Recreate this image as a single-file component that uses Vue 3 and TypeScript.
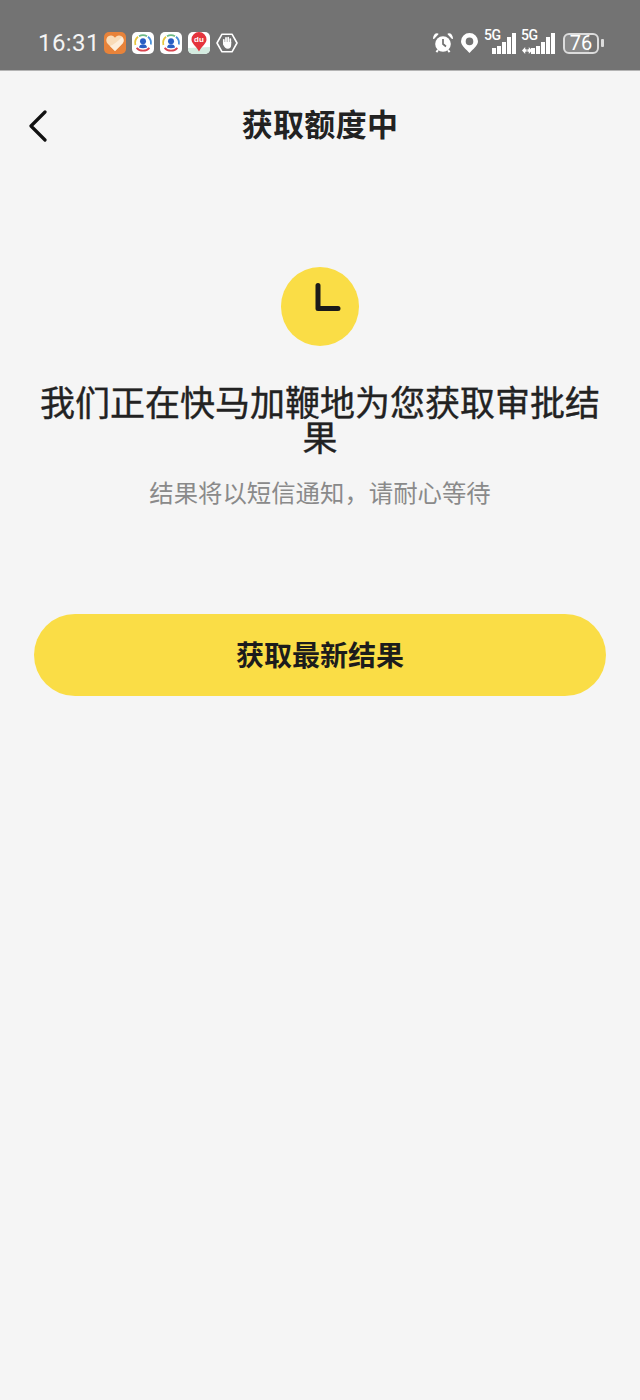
<template>
  <div class="page">
    <div class="status-bar">
      <span class="time">16:31</span>
      <div class="app-icons">
        <span class="app-icon orange">
          <svg width="22" height="22" viewBox="0 0 22 22">
            <path d="M11 19 L3.5 11.5 C0.8 8 3 3.5 7 3.5 C9 3.5 10.2 4.6 11 5.8 C11.8 4.6 13 3.5 15 3.5 C19 3.5 21.2 8 18.5 11.5 Z" fill="#f9dcb8" />
            <path d="M11 19 L6 14 C9 13 13 10 18 5 C20 7 20.2 9.5 18.5 11.5 Z" fill="#fdeedb" />
          </svg>
        </span>
        <span v-for="n in 2" :key="n" class="app-icon white">
          <svg width="22" height="22" viewBox="0 0 22 22" fill="none">
            <path d="M3.4 13 A8 8 0 0 1 6 4.8" stroke="#e8c63c" stroke-width="1.8" />
            <path d="M7 4.2 A8 8 0 0 1 15 4.2" stroke="#6dbb86" stroke-width="1.8" />
            <path d="M16 4.8 A8 8 0 0 1 18.8 12.5" stroke="#4a90d9" stroke-width="1.8" />
            <path d="M4.6 15.8 A8.5 8.5 0 0 0 17.4 15.8" stroke="#d9434e" stroke-width="1.8" />
            <circle cx="11" cy="9.2" r="3" fill="#2a5fc4" />
            <path d="M7 15.5 C7 11 15 11 15 15.5 Q11 16.8 7 15.5 Z" fill="#2a5fc4" />
          </svg>
        </span>
        <span class="app-icon white">
          <svg width="22" height="22" viewBox="0 0 22 22">
            <path d="M0 16 L22 15 L22 22 L0 22 Z" fill="#d4ebe0" />
            <path d="M11 19.5 C8 14 3.5 11.5 3.5 7.5 A7.5 7.5 0 0 1 18.5 7.5 C18.5 11.5 14 14 11 19.5 Z" fill="#e5343d" />
            <text x="11" y="9.5" class="du">du</text>
          </svg>
        </span>
        <svg class="hand" width="22" height="20" viewBox="0 0 22 20" fill="none">
          <path d="M6 1.2 H16 L21 10 L16 18.8 H6 L1 10 Z" stroke="#fff" stroke-width="1.6" stroke-linejoin="round" />
          <path d="M7.8 10 V6.8 M10 10 V4.8 M12.2 10 V4.6 M14.3 10 V6" stroke="#fff" stroke-width="1.7" stroke-linecap="round" />
          <path d="M7 9 H15.2 V11.5 C15.2 14.5 14 15.8 11.8 15.8 C9.5 15.8 8.8 14.5 7 11.5 Z" fill="#fff" />
        </svg>
      </div>
      <div class="status-right">
        <svg class="alarm" width="20" height="20" viewBox="0 0 20 20" fill="none">
          <circle cx="10" cy="11" r="7.8" fill="#fff" />
          <path d="M10 6 V11 L13 13.5" stroke="#6f6f6f" stroke-width="1.7" />
          <path d="M0.6 5.5 L4.8 1 Q1 0.4 0.6 5.5 Z M19.4 5.5 L15.2 1 Q19 0.4 19.4 5.5 Z" fill="#fff" stroke="#fff" stroke-width="1.2" stroke-linejoin="round" />
          <path d="M5 17 L3.4 19.2 M15 17 L16.6 19.2" stroke="#fff" stroke-width="2" />
        </svg>
        <svg class="pin" width="17" height="20" viewBox="0 0 17 20">
          <path fill-rule="evenodd" d="M8.5 20 C5.5 16.5 0 12.8 0 8.3 A8.5 8.3 0 0 1 17 8.3 C17 12.8 11.5 16.5 8.5 20 Z M8.5 4.6 A3.8 3.8 0 1 0 8.5 12.2 A3.8 3.8 0 1 0 8.5 4.6 Z" fill="#fff" />
        </svg>
        <div class="signal first">
          <span class="net">5G</span>
          <span v-for="h in bars" :key="h" class="bar" :style="{ height: h + 'px' }"></span>
        </div>
        <div class="signal second">
          <span class="net">5G</span>
          <svg class="updown" width="10" height="7" viewBox="0 0 10 7">
            <path d="M0 3.5 L3.2 0 V2.2 H4.6 V4.8 H3.2 V7 Z M10 3.5 L6.8 0 V2.2 H5.4 V4.8 H6.8 V7 Z" fill="#fff" />
          </svg>
          <span v-for="h in bars" :key="h" class="bar" :style="{ height: h + 'px' }"></span>
        </div>
        <div class="battery">
          <span class="battery-body">76</span>
          <span class="battery-tip"></span>
        </div>
      </div>
    </div>

    <div class="nav">
      <svg class="back" width="20" height="32" viewBox="0 0 20 32" fill="none">
        <path d="M17 2 L3 16 L17 30" stroke="#111" stroke-width="3.2" stroke-linecap="round" stroke-linejoin="round" />
      </svg>
      <h1 class="nav-title">获取额度中</h1>
    </div>

    <div class="content">
      <div class="clock">
        <svg width="79" height="79" viewBox="0 0 79 79" fill="none">
          <path d="M37 18.5 V41.5 H57" stroke="#1a1a1a" stroke-width="5" stroke-linecap="round" stroke-linejoin="round" />
        </svg>
      </div>
      <h2 class="headline">我们正在快马加鞭地为您获取审批结果</h2>
      <p class="hint">结果将以短信通知，请耐心等待</p>
      <button class="refresh">获取最新结果</button>
    </div>
  </div>
</template>

<script setup lang="ts">
const bars: number[] = [6, 8, 12, 17, 21]
</script>

<style>
body {
  margin: 0;
  background: #f5f5f5;
}
</style>

<style scoped>
.page {
  width: 640px;
  min-height: 1400px;
  background: #f5f5f5;
  font-family: "Noto Sans CJK SC", "Noto Sans", sans-serif;
  color: #222;
}

.status-bar {
  height: 71px;
  box-sizing: border-box;
  padding: 16px 36px 0 38px;
  background: #737373;
  border-bottom: 1px solid #b4b4b4;
  display: flex;
  align-items: center;
  color: #fff;
}

.time {
  width: 66px;
  font-family: Roboto, sans-serif;
  font-size: 24px;
  letter-spacing: 0.4px;
  color: #f4f4f4;
}

.app-icons {
  display: flex;
  align-items: center;
  gap: 6px;
}

.app-icon {
  width: 22px;
  height: 22px;
  border-radius: 5px;
  overflow: hidden;
  display: block;
}

.app-icon svg {
  display: block;
}

.orange {
  background: #e8833a;
}

.white {
  background: #fff;
}

.du {
  font-family: "Liberation Sans", sans-serif;
  font-size: 8px;
  font-weight: 700;
  fill: #fff;
  text-anchor: middle;
}

.status-right {
  margin-left: auto;
  display: flex;
  align-items: center;
}

.alarm {
  margin-right: 8px;
}

.pin {
  margin-right: 6px;
}

.signal {
  position: relative;
  height: 24px;
  margin-bottom: 2px;
  display: flex;
  align-items: flex-end;
  justify-content: flex-end;
  gap: 1.3px;
}

.first {
  width: 32px;
  margin-right: 5px;
}

.second {
  width: 34px;
  margin-right: 8px;
}

.bar {
  width: 3.8px;
  background: #fff;
}

.net {
  position: absolute;
  left: 0;
  top: -2px;
  font-family: Roboto, sans-serif;
  font-size: 14px;
  font-weight: 500;
  letter-spacing: -0.5px;
  line-height: 14px;
}

.updown {
  position: absolute;
  left: 1px;
  bottom: 0;
}

.battery {
  display: flex;
  align-items: center;
  gap: 2px;
}

.battery-body {
  width: 36px;
  height: 21px;
  box-sizing: border-box;
  border: 2px solid #dcdcdc;
  border-radius: 6px;
  background: linear-gradient(90deg, #8a8a8a 76%, transparent 76%);
  text-align: center;
  font-family: Roboto, sans-serif;
  font-size: 20px;
  line-height: 17px;
}

.battery-tip {
  width: 3px;
  height: 8px;
  border-radius: 1px;
  background: #dcdcdc;
}

.nav {
  position: relative;
  height: 109px;
  box-sizing: border-box;
  padding-bottom: 5px;
  display: flex;
  align-items: center;
  justify-content: center;
}

.back {
  position: absolute;
  left: 28px;
  top: 39px;
}

.nav-title {
  margin: 0;
  font-size: 31px;
  font-weight: 700;
  line-height: 44px;
  letter-spacing: 0.3px;
  color: #222;
}

.content {
  padding: 87px 34px 0;
  display: flex;
  flex-direction: column;
  align-items: center;
}

.clock {
  width: 78.5px;
  height: 79px;
  border-radius: 50%;
  background: #fadd46;
}

.clock svg {
  display: block;
}

.headline {
  margin: 37px 0 0;
  width: 572px;
  font-size: 35px;
  font-weight: 400;
  -webkit-text-stroke: 0.4px #222;
  line-height: 35px;
  text-align: center;
  color: #222;
}

.hint {
  margin: 21px 0 0;
  font-size: 24.4px;
  line-height: 36px;
  color: #8a8a8a;
}

.refresh {
  margin-top: 104px;
  padding: 0 0 2px;
  width: 572px;
  height: 82px;
  border: none;
  border-radius: 41px;
  background: #fadd46;
  font-family: inherit;
  font-size: 28px;
  font-weight: 700;
  color: #1c1c1c;
}
</style>
